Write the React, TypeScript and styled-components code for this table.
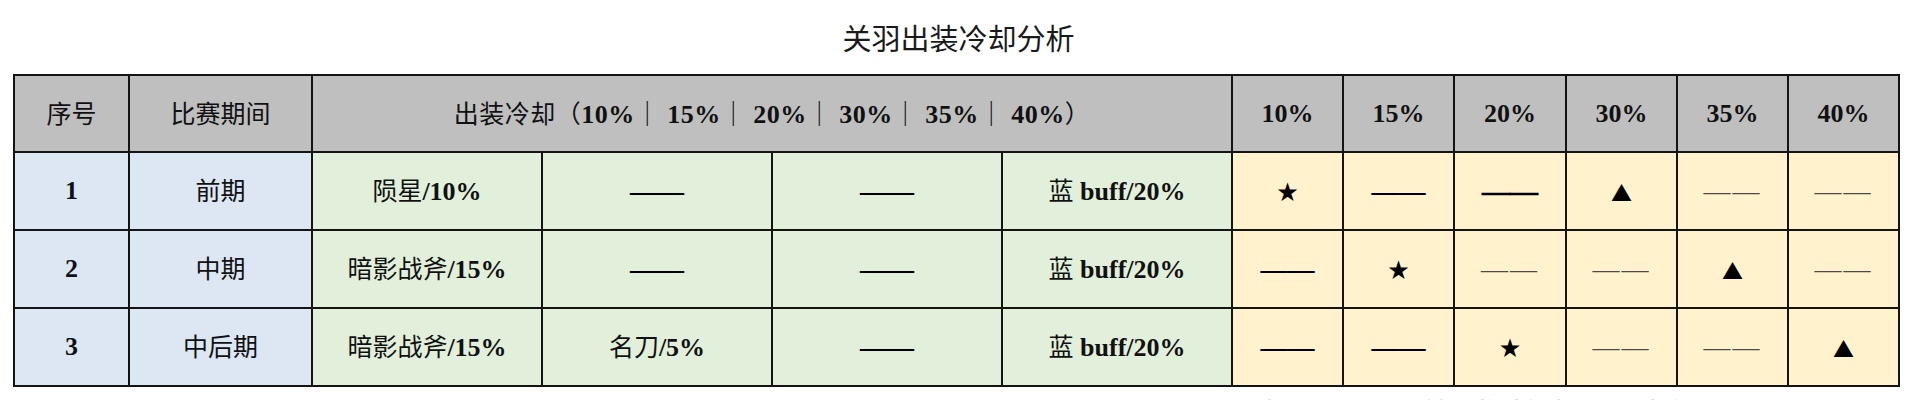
import React from 'react'
import styled, { createGlobalStyle } from 'styled-components'

const LATIN = '"Liberation Serif", "Times New Roman", serif'
const HAN = '"Noto Sans CJK SC", "Noto Sans", sans-serif'
const LINE = '2px solid #141414'

const COL_WIDTHS = [115, 183, 230, 230, 230, 230, 111, 111, 112, 111, 111, 111]
const LEVELS = ['10%', '15%', '20%', '30%', '35%', '40%']
const HAN_RUN = /([\u3000-\u303f\u3400-\u9fff\uff00-\uffef]+)/

type Fill = 'gray' | 'blue' | 'green' | 'yellow'
type Mark = 'text' | 'dash' | 'thin' | 'bar' | 'star' | 'tri'

type CellData = { mark: Mark; text?: string }

const FILLS: Record<Fill, string> = {
  gray: '#bfbfbf',
  blue: '#dde7f3',
  green: '#e2efda',
  yellow: '#fff2cc',
}

const GlobalStyle = createGlobalStyle`
  html, body {
    margin: 0;
    padding: 0;
    background: #ffffff;
  }
  body {
    font-family: ${LATIN};
    color: #111111;
  }
`

const Page = styled.div`
  position: relative;
  width: 1917px;
  height: 400px;
  overflow: hidden;
`

const Title = styled.h1`
  margin: 0;
  height: 74px;
  display: flex;
  align-items: center;
  justify-content: center;
  font-family: ${HAN};
  font-size: 29px;
  font-weight: 400;
  color: #1a1a1a;
`

const Sheet = styled.table`
  margin-left: 13px;
  border-collapse: collapse;
  table-layout: fixed;
  width: 1887px;
`

const HeadRow = styled.tr`
  height: 77px;
`

const BodyRow = styled.tr`
  height: 78px;
`

const Cell = styled.td<{ $fill: Fill }>`
  padding: 0;
  border: ${LINE};
  background: ${(p) => FILLS[p.$fill]};
  text-align: center;
  vertical-align: middle;
  font-family: ${LATIN};
  font-weight: 700;
  font-size: 26px;
  line-height: 1;
  white-space: nowrap;
`

const Caption = styled.span`
  letter-spacing: 0.5px;
`

const Han = styled.span`
  font-family: ${HAN};
  font-weight: 400;
  font-size: 25px;
`

// em dashes drawn as text, like the spreadsheet they come from
const Dash = styled.span<{ $heavy?: boolean }>`
  font-family: ${LATIN};
  font-weight: 700;
  font-size: ${(p) => (p.$heavy ? 28 : 27)}px;
  color: #000000;
  -webkit-text-stroke: ${(p) => (p.$heavy ? '0.6px #000' : '0')};
`

const ThinDash = styled.span`
  font-family: ${LATIN};
  font-weight: 400;
  font-size: 27px;
  letter-spacing: 2px;
  color: #4a4a4a;
`

const Symbol = styled.span<{ $drop?: number }>`
  display: inline-block;
  font-family: ${HAN};
  font-weight: 400;
  font-size: 21px;
  color: #000000;
  transform: translateY(${(p) => p.$drop ?? 0}px);
`

const Watermark = styled.div`
  position: absolute;
  left: 1262px;
  top: 387px;
  font-family: ${HAN};
  font-size: 40px;
  letter-spacing: 6px;
  color: #d4d4d4;
  white-space: nowrap;
  pointer-events: none;
`

const Mixed = ({ text }: { text: string }) => (
  <>
    {text.split(HAN_RUN).map((part, i) =>
      part === '' ? null : HAN_RUN.test(part) ? (
        <Han key={i}>{part}</Han>
      ) : (
        <React.Fragment key={i}>{part}</React.Fragment>
      ),
    )}
  </>
)

const renderMark = ({ mark, text }: CellData) => {
  switch (mark) {
    case 'dash':
      return <Dash>——</Dash>
    case 'bar':
      return <Dash $heavy>——</Dash>
    case 'thin':
      return <ThinDash>——</ThinDash>
    case 'star':
      return <Symbol>★</Symbol>
    case 'tri':
      return <Symbol $drop={2}>▲</Symbol>
    default:
      return <Mixed text={text ?? ''} />
  }
}

const t = (text: string): CellData => ({ mark: 'text', text })
const m = (mark: Mark): CellData => ({ mark })

const ROWS: { no: string; phase: string; items: CellData[]; levels: CellData[] }[] = [
  {
    no: '1',
    phase: '前期',
    items: [t('陨星/10%'), m('dash'), m('dash'), t('蓝 buff/20%')],
    levels: [m('star'), m('dash'), m('bar'), m('tri'), m('thin'), m('thin')],
  },
  {
    no: '2',
    phase: '中期',
    items: [t('暗影战斧/15%'), m('dash'), m('dash'), t('蓝 buff/20%')],
    levels: [m('dash'), m('star'), m('thin'), m('thin'), m('tri'), m('thin')],
  },
  {
    no: '3',
    phase: '中后期',
    items: [t('暗影战斧/15%'), t('名刀/5%'), m('dash'), t('蓝 buff/20%')],
    levels: [m('dash'), m('dash'), m('star'), m('thin'), m('thin'), m('tri')],
  },
]

export default function App() {
  return (
    <Page>
      <GlobalStyle />
      <Title>关羽出装冷却分析</Title>
      <Sheet>
        <colgroup>
          {COL_WIDTHS.map((w, i) => (
            <col key={i} style={{ width: w }} />
          ))}
        </colgroup>
        <tbody>
          <HeadRow>
            <Cell $fill="gray">
              <Han>序号</Han>
            </Cell>
            <Cell $fill="gray">
              <Han>比赛期间</Han>
            </Cell>
            <Cell $fill="gray" colSpan={4}>
              <Caption>
                <Mixed text="出装冷却（10%｜ 15%｜ 20%｜ 30%｜ 35%｜ 40%）" />
              </Caption>
            </Cell>
            {LEVELS.map((l) => (
              <Cell key={l} $fill="gray">
                {l}
              </Cell>
            ))}
          </HeadRow>
          {ROWS.map((row) => (
            <BodyRow key={row.no}>
              <Cell $fill="blue">{row.no}</Cell>
              <Cell $fill="blue">
                <Han>{row.phase}</Han>
              </Cell>
              {row.items.map((c, i) => (
                <Cell key={i} $fill="green">
                  {renderMark(c)}
                </Cell>
              ))}
              {row.levels.map((c, i) => (
                <Cell key={i} $fill="yellow">
                  {renderMark(c)}
                </Cell>
              ))}
            </BodyRow>
          ))}
        </tbody>
      </Sheet>
      <Watermark>知乎 @游戏数据分析</Watermark>
    </Page>
  )
}
